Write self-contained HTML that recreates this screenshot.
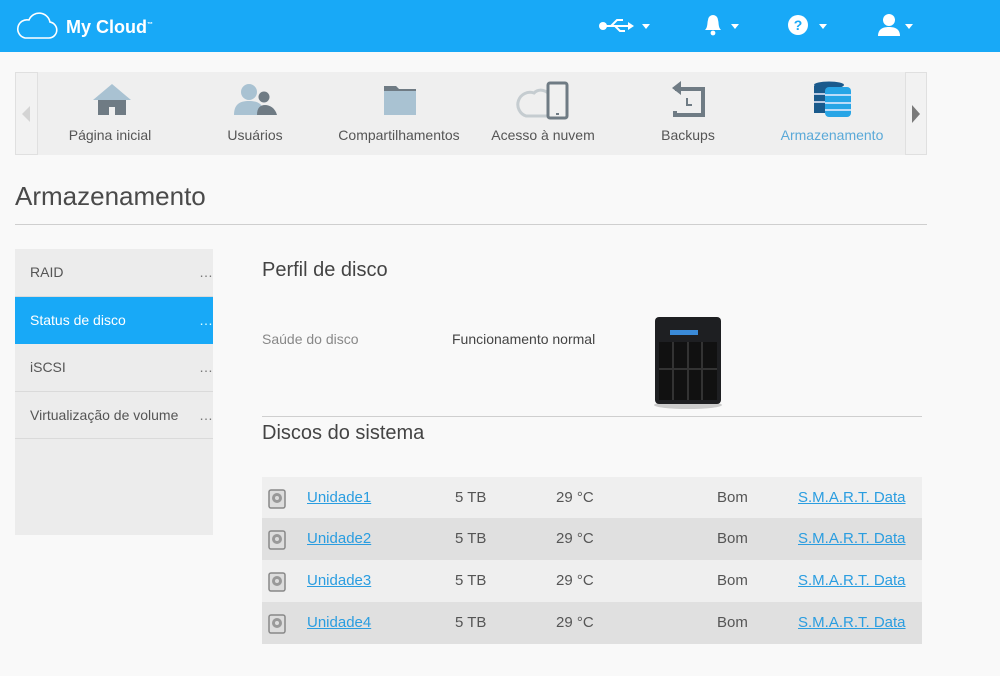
<!DOCTYPE html>
<html><head><meta charset="utf-8"><style>
*{margin:0;padding:0;box-sizing:border-box}
body{width:1000px;height:676px;background:#f9f9f9;font-family:"Liberation Sans",sans-serif;position:relative;overflow:hidden;color:#444}
.hdr{position:absolute;left:0;top:0;width:1000px;height:52px;background:#18a9f7}
.abs{position:absolute}
.nav{position:absolute;left:15px;top:72px;width:912px;height:83px;background:#efefef}
.nl{position:absolute;top:72px;height:83px;background:#f2f2f2;border:1px solid #e0e0e0}
.lbl{position:absolute;top:127px;font-size:14px;color:#555;text-align:center;width:160px}
.side{position:absolute;left:15px;top:249px;width:198px;height:286px;background:#ececec}
.si{height:47.5px;border-bottom:1px solid #dadada;font-size:14px;color:#555;padding-left:15px;line-height:47px;position:relative}
.si span{position:absolute;right:0;top:0;color:#777}
.row{position:absolute;left:262px;width:660px;height:42px;font-size:15px;color:#555;line-height:42px}
.row div{position:absolute;top:0}
.row a{color:#2a9de0;text-decoration:underline}
</style></head><body>
<div class="hdr">
<svg class="abs" style="left:16px;top:12px" width="42" height="28" viewBox="0 0 42 28"><path d="M9 26 H33 a8 8 0 0 0 1-15.9 A11 11 0 0 0 13 8 a8 8 0 0 0 -4 18z" fill="none" stroke="#fff" stroke-width="1.6"/></svg>
<div class="abs" style="left:66px;top:17px;color:#fff;font-size:18px;font-weight:bold">My Cloud<sup style="font-size:6px">™</sup></div>
<svg class="abs" style="left:598px;top:16px" width="56" height="20"><circle cx="5" cy="10" r="4" fill="#fff"/><path d="M5 10H32M13 10l6-6h6M17 10l5 5h5" stroke="#fff" stroke-width="2" fill="none"/><path d="M30 6l6 4-6 4z" fill="#fff"/><path d="M44 8h8l-4 5z" fill="#fff"/></svg>
<svg class="abs" style="left:702px;top:13px" width="40" height="24"><path d="M3 17c3-3 2-7 3-10a5 5 0 0 1 10 0c1 3 0 7 3 10z" fill="#fff"/><circle cx="11" cy="20" r="2.4" fill="#fff"/><path d="M29 11h8l-4 5z" fill="#fff"/></svg>
<svg class="abs" style="left:787px;top:13px" width="42" height="24"><circle cx="11" cy="12" r="10" fill="#fff"/><text x="11" y="17" font-size="14" font-weight="bold" text-anchor="middle" fill="#18a9f7" font-family="Liberation Sans">?</text><path d="M32 11h8l-4 5z" fill="#fff"/></svg>
<svg class="abs" style="left:877px;top:12px" width="40" height="26"><circle cx="12" cy="8" r="6" fill="#fff"/><path d="M1 24c0-7 5-9 11-9s11 2 11 9z" fill="#fff"/><path d="M28 12h8l-4 5z" fill="#fff"/></svg>
</div>
<div class="nav"></div>
<div class="nl" style="left:15px;width:23px"></div>
<div class="nl" style="left:905px;width:22px"></div>
<svg class="abs" style="left:21px;top:106px" width="10" height="16"><path d="M9 0v16L1 8z" fill="#d4d4d4"/></svg>
<svg class="abs" style="left:911px;top:105px" width="10" height="18"><path d="M1 0v18L9 9z" fill="#7a7a7a"/></svg>
<svg class="abs" style="left:92px;top:82px" width="40" height="36"><path d="M20 2L1 18h38z" fill="#a9c2d2"/><path d="M6 18h28v15H23v-8h-6v8H6z" fill="#6f7b84"/></svg>
<svg class="abs" style="left:233px;top:82px" width="46" height="34"><circle cx="16" cy="10" r="8" fill="#a9c2d2"/><path d="M1 33c0-11 6-14 15-14s15 3 15 14z" fill="#a9c2d2"/><circle cx="31" cy="15" r="5.5" fill="#6f7b84"/><path d="M24 33c0-7 3-10 8-10s10 3 12 10z" fill="#6f7b84"/></svg>
<svg class="abs" style="left:383px;top:85px" width="34" height="30"><path d="M1 1h12l3 3h17v26H1z" fill="#a9c2d2"/><path d="M1 1h12l3 3h17v2H1z" fill="#6f7b84"/></svg>
<svg class="abs" style="left:516px;top:80px" width="56" height="40"><path d="M10 36h24V16a10 10 0 0 0-16-3A9 9 0 0 0 10 36z" fill="none" stroke="#c5ccd0" stroke-width="3"/><rect x="32" y="3" width="19" height="35" rx="2" fill="#f0f0f0" stroke="#6f7b84" stroke-width="3"/><rect x="40" y="33" width="3" height="2" fill="#6f7b84"/></svg>
<svg class="abs" style="left:671px;top:81px" width="36" height="36"><path d="M4 8h28v26H4v-4" fill="none" stroke="#6f7b84" stroke-width="4"/><path d="M10 0L1 7l9 7z" fill="#6f7b84"/><path d="M16 17v7h5" stroke="#6f7b84" stroke-width="2" fill="none"/></svg>
<svg class="abs" style="left:812px;top:81px" width="40" height="36"><ellipse cx="17" cy="4" rx="15" ry="3.5" fill="#1a5a8c"/><rect x="2" y="5" width="15" height="27" fill="#1a5a8c"/><rect x="13" y="6" width="26" height="30" rx="4" fill="#27a5e6"/><path d="M13 14h26M13 22h26M13 29h26M2 13h11M2 21h11" stroke="#eef" stroke-width="1.5"/></svg>
<div class="lbl" style="left:30px">Página inicial</div>
<div class="lbl" style="left:175px">Usuários</div>
<div class="lbl" style="left:319px">Compartilhamentos</div>
<div class="lbl" style="left:463px">Acesso à nuvem</div>
<div class="lbl" style="left:608px">Backups</div>
<div class="lbl" style="left:752px;color:#5aa9d8">Armazenamento</div>
<div class="abs" style="left:15px;top:181px;font-size:26px;color:#4a4a4a">Armazenamento</div>
<div class="abs" style="left:15px;top:224px;width:912px;border-top:1px solid #cfcfcf"></div>
<div class="side">
<div class="si">RAID<span>…</span></div>
<div class="si" style="background:#18a9f7;color:#fff;border-color:#18a9f7">Status de disco<span style="color:#dff">…</span></div>
<div class="si">iSCSI<span>…</span></div>
<div class="si">Virtualização de volume<span>…</span></div>
</div>
<div class="abs" style="left:262px;top:259px;font-size:20px;color:#444">Perfil de disco</div>
<div class="abs" style="left:262px;top:331px;font-size:14px;color:#888">Saúde do disco</div>
<div class="abs" style="left:452px;top:331px;font-size:14px;color:#444">Funcionamento normal</div>
<svg class="abs" style="left:650px;top:314px" width="76" height="96"><ellipse cx="38" cy="91" rx="34" ry="4" fill="#ccc"/><rect x="5" y="3" width="66" height="87" rx="4" fill="#1e1f22"/><rect x="20" y="16" width="28" height="5" fill="#3a8ad8"/><rect x="9" y="28" width="58" height="58" fill="#111"/><path d="M23 28v58M38 28v58M52 28v58M9 55h58" stroke="#333" stroke-width="2"/></svg>
<div class="abs" style="left:262px;top:416px;width:660px;border-top:1px solid #cfcfcf"></div>
<div class="abs" style="left:262px;top:422px;font-size:20px;color:#444">Discos do sistema</div>
<div class="row" style="top:477px;background:#efefef"><svg style="position:absolute;left:6px;top:12px" width="18" height="20"><rect x="1" y="1" width="16" height="18" rx="2" fill="#ddd" stroke="#888" stroke-width="1.5"/><circle cx="9" cy="9" r="5" fill="#999"/><circle cx="9" cy="9" r="2" fill="#ddd"/></svg><div style="left:45px"><a>Unidade1</a></div><div style="left:193px">5 TB</div><div style="left:294px">29 °C</div><div style="left:455px">Bom</div><div style="left:536px"><a>S.M.A.R.T. Data</a></div></div>
<div class="row" style="top:518px;background:#e0e0e0"><svg style="position:absolute;left:6px;top:12px" width="18" height="20"><rect x="1" y="1" width="16" height="18" rx="2" fill="#ddd" stroke="#888" stroke-width="1.5"/><circle cx="9" cy="9" r="5" fill="#999"/><circle cx="9" cy="9" r="2" fill="#ddd"/></svg><div style="left:45px"><a>Unidade2</a></div><div style="left:193px">5 TB</div><div style="left:294px">29 °C</div><div style="left:455px">Bom</div><div style="left:536px"><a>S.M.A.R.T. Data</a></div></div>
<div class="row" style="top:560px;background:#efefef"><svg style="position:absolute;left:6px;top:12px" width="18" height="20"><rect x="1" y="1" width="16" height="18" rx="2" fill="#ddd" stroke="#888" stroke-width="1.5"/><circle cx="9" cy="9" r="5" fill="#999"/><circle cx="9" cy="9" r="2" fill="#ddd"/></svg><div style="left:45px"><a>Unidade3</a></div><div style="left:193px">5 TB</div><div style="left:294px">29 °C</div><div style="left:455px">Bom</div><div style="left:536px"><a>S.M.A.R.T. Data</a></div></div>
<div class="row" style="top:602px;background:#e0e0e0"><svg style="position:absolute;left:6px;top:12px" width="18" height="20"><rect x="1" y="1" width="16" height="18" rx="2" fill="#ddd" stroke="#888" stroke-width="1.5"/><circle cx="9" cy="9" r="5" fill="#999"/><circle cx="9" cy="9" r="2" fill="#ddd"/></svg><div style="left:45px"><a>Unidade4</a></div><div style="left:193px">5 TB</div><div style="left:294px">29 °C</div><div style="left:455px">Bom</div><div style="left:536px"><a>S.M.A.R.T. Data</a></div></div>
</body></html>
